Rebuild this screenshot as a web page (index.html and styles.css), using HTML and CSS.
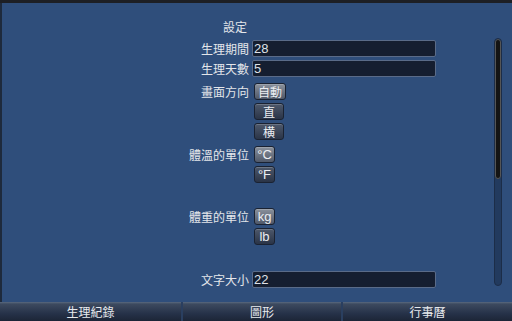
FILE: index.html
```html
<!DOCTYPE html>
<html lang="zh-Hant">

<head>
    <meta charset="UTF-8">
    <meta name="viewport" content="width=device-width, initial-scale=1.0">
    <title>設定</title>
    <link rel="stylesheet" href="styles.css">
</head>

<body>
    <div class="screen">
        <div class="content">
            <div class="title">設定</div>

            <div class="row">
                <span class="label">生理期間</span>
                <div class="controls"><div class="field">28</div></div>
            </div>
            <div class="row gap-s">
                <span class="label">生理天數</span>
                <div class="controls"><div class="field">5</div></div>
            </div>
            <div class="row gap-m">
                <span class="label">畫面方向</span>
                <div class="controls">
                    <button class="btn w32 on">自動</button>
                    <button class="btn w30">直</button>
                    <button class="btn w30">横</button>
                </div>
            </div>
            <div class="row gap-m">
                <span class="label">體溫的單位</span>
                <div class="controls">
                    <button class="btn w20 on">°C</button>
                    <button class="btn w20">°F</button>
                </div>
            </div>
            <div class="row gap-l">
                <span class="label">體重的單位</span>
                <div class="controls">
                    <button class="btn w20 on">kg</button>
                    <button class="btn w20">lb</button>
                </div>
            </div>
            <div class="row gap-xl">
                <span class="label">文字大小</span>
                <div class="controls"><div class="field">22</div></div>
            </div>
        </div>

        <div class="scrollbar"><div class="thumb"></div></div>
    </div>

    <nav class="tabs">
        <div class="tab">生理紀錄</div>
        <div class="tab">圖形</div>
        <div class="tab">行事曆</div>
    </nav>
</body>

</html>
```

FILE: styles.css
```css
body {
    margin: 0;
    width: 512px;
    height: 321px;
    overflow: hidden;
    background-color: #1d1f24;
    font-family: "Noto Sans CJK TC", "Liberation Sans", sans-serif;
    font-size: 12px;
    color: #e4e6ea;
}

.screen {
    position: relative;
    margin-top: 3px;
    height: 299px;
    background-color: #2f4e7b;
    border-left: 2px solid #1e2a3c;
    box-sizing: border-box;
}

.content {
    height: 286px;
    overflow: hidden;
    padding-top: 16px;
    box-sizing: border-box;
}

.title {
    width: 245px;
    text-align: right;
    line-height: 16px;
    margin-bottom: 5px;
}

.row {
    display: grid;
    grid-template-columns: 247px 184px;
    column-gap: 3px;
    align-items: start;
}

.gap-s { margin-top: 3px; }
.gap-m { margin-top: 6px; }
.gap-l { margin-top: 25px; }
.gap-xl { margin-top: 26px; }

.label {
    text-align: right;
    line-height: 17px;
    white-space: nowrap;
}

.controls {
    display: flex;
    flex-direction: column;
    align-items: flex-start;
    gap: 3px;
}

.field {
    width: 184px;
    height: 17px;
    box-sizing: border-box;
    background-color: #151e30;
    border: 1px solid #5a6b88;
    border-radius: 2px;
    padding-left: 1px;
    line-height: 15px;
    font-family: "Liberation Sans", sans-serif;
    font-size: 13px;
    color: #dfe2e8;
}

.btn {
    height: 17px;
    margin-left: 2px;
    padding: 0;
    box-sizing: border-box;
    border: 1px solid #1a2232;
    border-radius: 3px;
    background: linear-gradient(#4d586b, #2a3447);
    box-shadow: inset 0 1px 0 rgba(255, 255, 255, 0.18);
    font-family: "Noto Sans CJK TC", "Liberation Sans", sans-serif;
    font-size: 12px;
    line-height: 15px;
    color: #eceef2;
    cursor: pointer;
}

.btn.on {
    background: linear-gradient(#8a919c, #4f5869);
}

.w20 { width: 21px; font-family: "Liberation Sans", sans-serif; font-size: 13px; }
.w30 { width: 30px; }
.w32 { width: 32px; }

.scrollbar {
    position: absolute;
    left: 492px;
    top: 35px;
    width: 8px;
    height: 248px;
    border-radius: 4px;
    background-color: #223a5e;
    border: 1px solid #1c2d48;
    box-sizing: border-box;
    overflow: hidden;
}

.thumb {
    height: 140px;
    background-color: #141414;
    border: 1px solid #555;
    border-radius: 4px;
    box-sizing: border-box;
}

.tabs {
    display: grid;
    grid-template-columns: 181px 158px 1fr;
    column-gap: 2px;
    height: 19px;
    background-color: #2a3f60;
}

.tab {
    background: linear-gradient(#5a697f 0, #3d4a5f 2px, #263249 60%, #1c2536);
    text-align: center;
    line-height: 19px;
    color: #e8eaee;
}
```
